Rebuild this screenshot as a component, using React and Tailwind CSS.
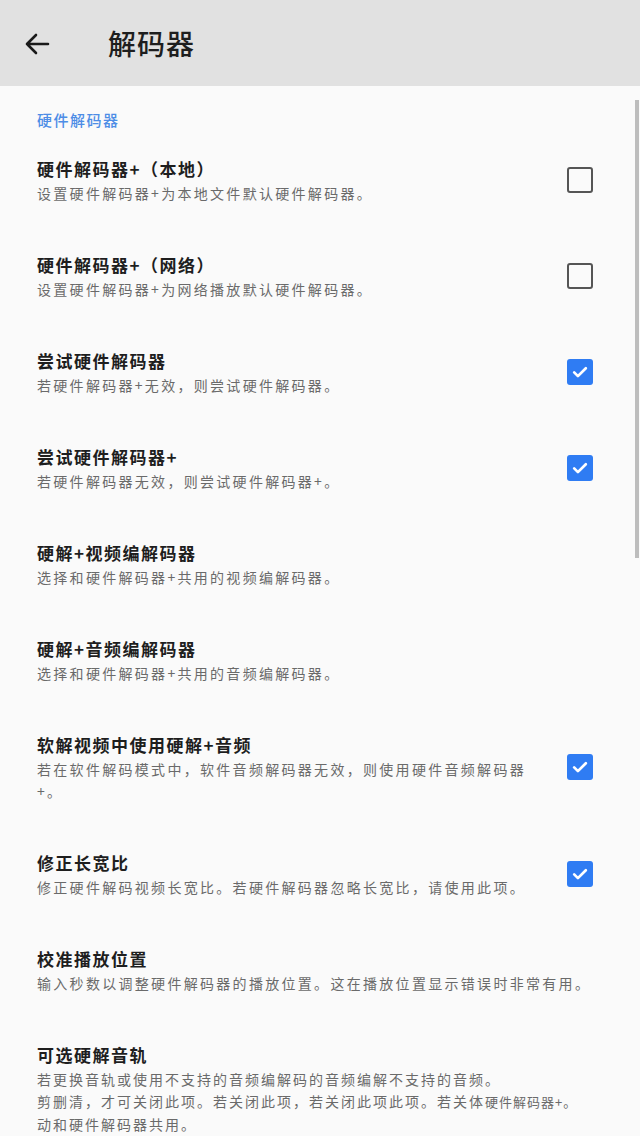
import React from 'react';

const settings = [
  { title: '硬件解码器+（本地）', desc: ['设置硬件解码器+为本地文件默认硬件解码器。'], checked: false },
  { title: '硬件解码器+（网络）', desc: ['设置硬件解码器+为网络播放默认硬件解码器。'], checked: false },
  { title: '尝试硬件解码器', desc: ['若硬件解码器+无效，则尝试硬件解码器。'], checked: true },
  { title: '尝试硬件解码器+', desc: ['若硬件解码器无效，则尝试硬件解码器+。'], checked: true },
  { title: '硬解+视频编解码器', desc: ['选择和硬件解码器+共用的视频编解码器。'] },
  { title: '硬解+音频编解码器', desc: ['选择和硬件解码器+共用的音频编解码器。'] },
  {
    title: '软解视频中使用硬解+音频',
    desc: ['若在软件解码模式中，软件音频解码器无效，则使用硬件音频解码器', '+。'],
    checked: true,
  },
  { title: '修正长宽比', desc: ['修正硬件解码视频长宽比。若硬件解码器忽略长宽比，请使用此项。'], checked: true },
  { title: '校准播放位置', desc: ['输入秒数以调整硬件解码器的播放位置。这在播放位置显示错误时非常有用。'] },
];

function Checkbox({ checked }) {
  if (checked) {
    return (
      <div className="w-[26px] h-[26px] rounded-[3px] bg-[#2f7cf3] flex items-center justify-center">
        <svg width="20" height="20" viewBox="0 0 24 24" fill="none" stroke="#fff" strokeWidth="3.2" strokeLinecap="round" strokeLinejoin="round">
          <path d="M5 12.5l4.5 4.5L19 7.5" />
        </svg>
      </div>
    );
  }
  return <div className="w-[26px] h-[26px] rounded-[3px] border-[2.5px] border-[#555]" />;
}

function SettingRow({ title, desc, checked }) {
  const hasBox = checked !== undefined;
  return (
    <div className="flex items-center py-[24px]">
      <div className="flex-1 min-w-0">
        <div className="text-[17px] leading-[26px] font-bold tracking-[1.5px] text-[#1e1e1e]">{title}</div>
        {desc.map((line, i) => (
          <div key={i} className="text-[14px] leading-[22px] tracking-[2.3px] text-[#6a6a6a] whitespace-nowrap">{line}</div>
        ))}
      </div>
      {hasBox && (
        <div className="ml-4 shrink-0">
          <Checkbox checked={checked} />
        </div>
      )}
    </div>
  );
}

export default function App() {
  return (
    <main className="relative w-[640px] h-[1136px] overflow-hidden bg-[#fafafa] font-['Noto_Sans_CJK_SC',sans-serif]">
      {/* top bar */}
      <header className="h-[86px] bg-[#e1e1e1] flex items-center">
        <div className="w-[108px] pl-[24px] pt-[1px]">
          <svg width="26" height="24" viewBox="0 0 26 24" fill="none" stroke="#1a1a1a" strokeWidth="2.6" strokeLinecap="round" strokeLinejoin="round">
            <path d="M24 12H3M12 3l-9 9 9 9" />
          </svg>
        </div>
        <h1 className="text-[28px] leading-[36px] font-medium tracking-[1px] text-[#1e1e1e]">解码器</h1>
      </header>

      <section className="pl-[37px] pr-[47px]">
        <div className="pt-[24px] pb-[2px] text-[15px] leading-[20px] font-medium tracking-[1.5px] text-[#4d8de6]">硬件解码器</div>

        {settings.map((s) => (
          <SettingRow key={s.title} {...s} />
        ))}

        {/* last item, cut off by the screen */}
        <div className="py-[24px]">
          <div className="text-[17px] leading-[26px] font-bold tracking-[1.5px] text-[#1e1e1e]">可选硬解音轨</div>
          <div className="text-[14px] leading-[22px] tracking-[2px] text-[#6a6a6a] whitespace-nowrap">若更换音轨或使用不支持的音频编解码的音频编解不支持的音频。</div>
          <div className="text-[14px] leading-[22px] tracking-[2px] text-[#6a6a6a] whitespace-nowrap">
            剪删清，才可关闭此项。若关闭此项，若关闭此项此项。若关体
            <span className="text-[13px] tracking-[1px]">硬件解码器+。</span>
          </div>
          <div className="text-[14px] leading-[22px] tracking-[2px] text-[#6a6a6a] whitespace-nowrap">动和硬件解码器共用。</div>
        </div>
      </section>

      {/* scrollbar */}
      <div className="absolute right-[1px] top-[100px] w-[4px] h-[458px] bg-[#bdbdbd]" />
    </main>
  );
}
